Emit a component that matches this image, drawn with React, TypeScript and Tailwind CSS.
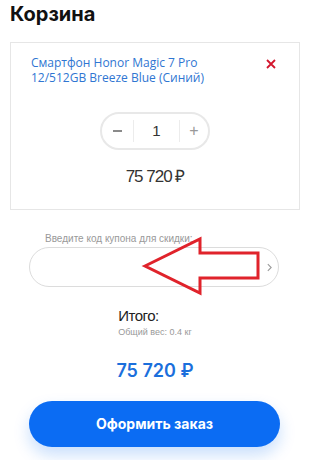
export default function App() {
  return (
    <div className="relative h-[460px] w-[310px] overflow-hidden bg-white">
      <h1 className="px-[10px] pt-[2px] font-['Inter',sans-serif] text-[20px] leading-[24px] font-bold text-[#111]">
        Корзина
      </h1>

      <section className="mx-[10px] mt-[16px] h-[168px] border border-[#e6e6e6] pt-[12px]">
        <div className="flex items-start justify-between pl-[20px] pr-[23px]">
          <a className="w-[200px] font-['Open_Sans',sans-serif] text-[12px] leading-[15px] text-[#2f76d2]">
            Смартфон Honor Magic 7 Pro 12/512GB Breeze Blue (Синий)
          </a>
          <button type="button" className="mt-[4px] h-[10px] w-[10px]">
            <svg viewBox="0 0 10 10" className="h-[10px] w-[10px]">
              <path d="M1 1L9 9M9 1L1 9" stroke="#d3162d" strokeWidth="1.8" />
            </svg>
          </button>
        </div>

        <div className="mx-auto mt-[27px] flex h-[38px] w-[110px] items-center rounded-full border-2 border-[#e8e8e8] font-['Liberation_Sans',sans-serif]">
          <div className="flex h-full w-[31px] items-center justify-center">
            <span className="h-[1.5px] w-[9px] bg-[#8a8a8a]" />
          </div>
          <div className="h-[22px] w-px bg-[#ececec]" />
          <div className="flex w-[45px] items-center justify-center text-[15px] text-[#333]">
            1
          </div>
          <div className="h-[22px] w-px bg-[#ececec]" />
          <div className="flex h-full w-[28px] items-center justify-center text-[16px] text-[#999]">
            +
          </div>
        </div>

        <p className="mt-[17px] text-center font-['Liberation_Sans',sans-serif] text-[17px] leading-[20px] tracking-[-1px] text-[#333]">
          75 720 ₽
        </p>
      </section>

      <div className="mx-[29px] mt-[23px] w-[250px]">
        <label className="block pl-[16px] font-['Liberation_Sans',sans-serif] text-[10px] leading-[12px] text-[#999]">
          Введите код купона для скидки:
        </label>
        <div className="mt-[2px] flex h-[40px] items-center justify-end rounded-full border border-[#dcdcdc] pr-[6px]">
          <svg viewBox="0 0 6 10" className="h-[9px] w-[5px]">
            <path d="M1 1L5 5L1 9" fill="none" stroke="#9a9a9a" strokeWidth="1.3" />
          </svg>
        </div>
      </div>

      <div className="mt-[20px] flex justify-center">
        <div className="font-['Liberation_Sans',sans-serif]">
          <p className="text-[15px] leading-[18px] tracking-[-0.5px] text-[#222]">Итого:</p>
          <p className="mt-[1.5px] text-[9px] leading-[11px] text-[#999]">Общий вес: 0.4 кг</p>
        </div>
      </div>

      <p className="mt-[22px] text-center font-['Inter',sans-serif] text-[18px] leading-[22px] font-semibold text-[#1b6fdc]">
        75 720 ₽
      </p>

      <button
        type="button"
        className="mx-[29px] mt-[19px] flex h-[46px] w-[251px] items-center justify-center rounded-full bg-[#0b6cf3] font-['Inter',sans-serif] text-[14px] font-bold text-white shadow-[0_8px_16px_rgba(11,108,243,0.22)]"
      >
        Оформить заказ
      </button>

      <svg
        className="absolute left-[140px] top-[235px]"
        width="125"
        height="62"
        viewBox="0 0 125 62"
      >
        <polygon
          points="5,31 60,4 60,18 118,18 118,43 60,43 60,58"
          fill="none"
          stroke="#e0232b"
          strokeWidth="3"
        />
      </svg>
    </div>
  );
}
